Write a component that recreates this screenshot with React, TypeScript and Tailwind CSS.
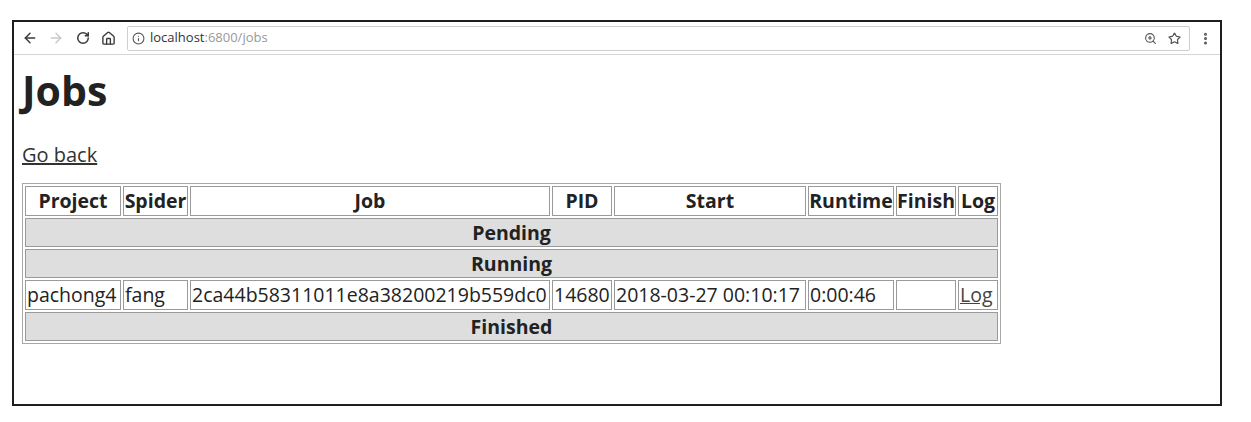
import { ArrowLeft, ArrowRight, RotateCw, House, Info, ZoomIn, Star, EllipsisVertical } from 'lucide-react';

const columns = [
  { label: 'Project', w: 'w-[96px]' },
  { label: 'Spider', w: 'w-[65px]' },
  { label: 'Job', w: 'w-[360px]' },
  { label: 'PID', w: 'w-[60px]' },
  { label: 'Start', w: 'w-[192px]' },
  { label: 'Runtime', w: 'w-[86px]' },
  { label: 'Finish', w: 'w-[60px]' },
  { label: 'Log', w: 'w-[40px]' },
];

const running = ['pachong4', 'fang', '2ca44b58311011e8a38200219b559dc0', '14680', '2018-03-27 00:10:17', '0:00:46', ''];

function Section({ title }: { title: string }) {
  return (
    <tr>
      <th colSpan={8} className="h-[29px] p-0 border border-[#9a9a9a] bg-[#dedede] font-bold text-center">
        {title}
      </th>
    </tr>
  );
}

export default function App() {
  return (
    <div className="w-[1251px] h-[422px] bg-white pt-[20px] pl-[12px] font-['Open_Sans',sans-serif] text-[#222]">
      <div className="w-[1210px] h-[386px] border-2 border-[#1e1e1e] flex flex-col">
        {/* browser toolbar */}
        <div className="h-[33px] shrink-0 flex items-center border-b border-[#d6d6d6] pl-[8px] pr-[7px]">
          <ArrowLeft size={16} strokeWidth={2.2} className="text-[#3a3a3a]" />
          <ArrowRight size={16} strokeWidth={2.2} className="text-[#c8c8c8] ml-[10px]" />
          <RotateCw size={14} strokeWidth={2.6} className="text-[#3a3a3a] ml-[12px]" />
          <House size={15} strokeWidth={2.2} className="text-[#3a3a3a] ml-[11px]" />
          <div className="ml-[11px] flex-1 h-[25px] border border-[#cfcfcf] rounded-[2px] flex items-center px-[4px] text-[13px]">
            <Info size={13} strokeWidth={2} className="text-[#555]" />
            <span className="ml-[5px] text-[#333]">localhost</span>
            <span className="text-[#999]">:6800/jobs</span>
            <div className="flex-1" />
            <ZoomIn size={13} strokeWidth={2} className="text-[#555] mr-[11px]" />
            <Star size={13} strokeWidth={2.2} className="text-[#555] mr-[4px]" />
          </div>
          <EllipsisVertical size={15} strokeWidth={2.8} className="text-[#555] ml-[8px]" />
        </div>

        {/* page */}
        <div className="pl-[8px]">
          <h1 className="mt-[11px] text-[41px] leading-[48px] font-bold text-[#222]">Jobs</h1>
          <p className="mt-[29px] text-[20px] leading-[24px]">
            <a href="#" className="underline text-[#333]">Go back</a>
          </p>
          <table className="mt-[16px] border border-[#a8a8a8] border-separate border-spacing-[2px] text-[19.5px] leading-[26px] table-fixed">
            <thead>
              <tr>
                {columns.map((c) => (
                  <th key={c.label} className={`${c.w} h-[30px] p-0 border border-[#9a9a9a] bg-white font-bold text-center whitespace-nowrap`}>
                    {c.label}
                  </th>
                ))}
              </tr>
            </thead>
            <tbody>
              <Section title="Pending" />
              <Section title="Running" />
              <tr>
                {running.map((v, i) => (
                  <td key={i} className="h-[30px] p-0 pl-[1px] border border-[#9a9a9a] bg-white whitespace-nowrap">
                    {v}
                  </td>
                ))}
                <td className="h-[30px] p-0 pl-[1px] border border-[#9a9a9a] bg-white">
                  <a href="#" className="underline text-[#444]">Log</a>
                </td>
              </tr>
              <Section title="Finished" />
            </tbody>
          </table>
        </div>
      </div>
    </div>
  );
}
